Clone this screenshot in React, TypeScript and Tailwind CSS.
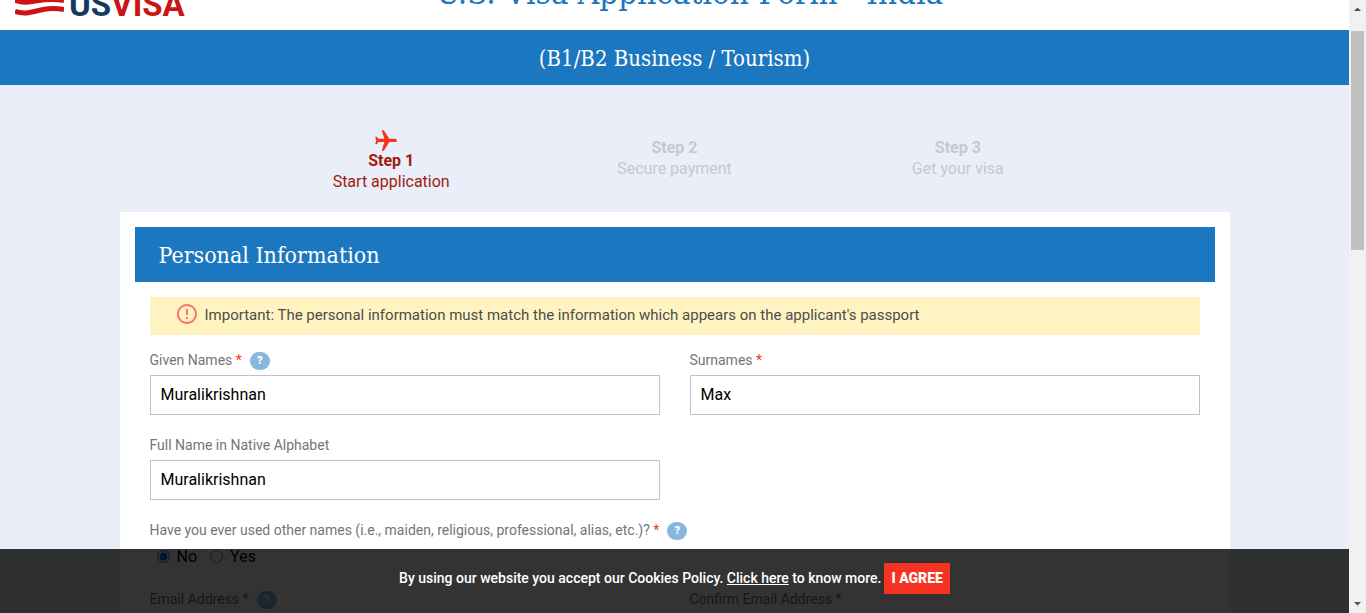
import type { ReactNode } from "react";
import { MdErrorOutline, MdFlight } from "react-icons/md";

const slab = "font-['DejaVu_Serif_Condensed','DejaVu_Serif',serif]";

function Help() {
  return (
    <button
      type="button"
      aria-label="Help"
      className="mt-[2px] ml-2 inline-flex h-[18px] w-5 items-center justify-center rounded-full bg-[#87b7de] text-[11px] font-black text-white"
    >
      ?
    </button>
  );
}

function LabelText({ children, required }: { children: ReactNode; required?: boolean }) {
  return (
    <>
      {children}
      {required && <span className="text-[#f5331f]"> *</span>}
    </>
  );
}

type FieldProps = { id: string; label: string; value?: string; required?: boolean; help?: boolean };

function Field({ id, label, value, required, help }: FieldProps) {
  return (
    <div>
      <div className="flex h-[30px] items-center text-sm text-[#757575]">
        <label htmlFor={id}>
          <LabelText required={required}>{label}</LabelText>
        </label>
        {help && <Help />}
      </div>
      <input
        id={id}
        type="text"
        defaultValue={value}
        className="block h-10 w-full border border-[#bfc3cf] bg-white px-[10px] pb-[2px] text-base text-black outline-none"
      />
    </div>
  );
}

function Step({ title, text, active }: { title: string; text: string; active?: boolean }) {
  return (
    <li
      className={
        active
          ? "flex flex-col items-center text-[#a01c0c]"
          : "flex flex-col items-center pt-2 text-[#c5c9d2]"
      }
    >
      {active && (
        <span className="flex h-[21px] items-end pr-[10px]">
          <MdFlight className="-mb-1 size-[26px] rotate-90 text-[#f5331f]" />
        </span>
      )}
      <span className="text-base/[21px] font-bold">{title}</span>
      <span className="text-base/[21px]">{text}</span>
    </li>
  );
}

function Logo() {
  return (
    <a href="#home" aria-label="US Visa" className="flex items-end">
      <svg width="49" height="34" viewBox="0 0 49 34" className="mr-[5px] mb-[6px]" fill="none">
        <path
          d="M0 29.500C17 35 25 23 49 27.500M0 18.500C17 24 25 14 49 18.500M0 8.500C17 14 25 3 49 7.500"
          stroke="#cc1417"
          strokeWidth="5"
        />
      </svg>
      <span className="text-[33px]/[34px] font-bold text-[#cc1417]">
        <span className="text-[#123b5d]">US</span>VISA
      </span>
    </a>
  );
}

export default function App() {
  return (
    <div className="relative flex h-screen overflow-hidden bg-[#eaeef8] font-[Roboto,sans-serif]">
      <main className="min-w-0 flex-1 overflow-hidden">
        <header className="grid grid-cols-[201px_1fr_186px] grid-rows-[30px] items-end overflow-hidden bg-white pl-[15px]">
          <div className="pb-2">
            <Logo />
          </div>
          <h1 className={`${slab} flex justify-center pb-[19px] text-[33px]/[36px] whitespace-nowrap text-[#1b77c0]`}>
            U.S. Visa Application Form - India
          </h1>
        </header>
        <h2 className={`${slab} bg-[#1b77c0] pt-[2px] text-center text-[22px]/[53px] text-white`}>
          (B1/B2 Business / Tourism)
        </h2>

        <ol className="mx-auto grid max-w-[850px] grid-cols-3 pt-11 pb-5">
          <Step title="Step 1" text="Start application" active />
          <Step title="Step 2" text="Secure payment" />
          <Step title="Step 3" text="Get your visa" />
        </ol>

        <form className="mx-auto max-w-[1110px] bg-white p-[15px]">
          <h3 className={`${slab} bg-[#1b77c0] px-6 pt-[2px] text-[23px]/[53px] text-white`}>
            Personal Information
          </h3>
          <div className="px-[15px]">
            <p className="mt-[15px] mb-[10px] flex h-[38px] items-center bg-[#fff4c1] px-[25px] pb-[2px] text-[15px] text-[#4c4c4c]">
              <MdErrorOutline className="mr-[6px] mb-[2px] size-6 text-[#fb7570]" />
              Important: The personal information must match the information which appears on the
              applicant's passport
            </p>
            <div className="grid grid-cols-2 gap-x-[30px] gap-y-[15px]">
              <Field id="given" label="Given Names" value="Muralikrishnan" required help />
              <Field id="surnames" label="Surnames" value="Max" required />
              <Field id="native" label="Full Name in Native Alphabet" value="Muralikrishnan" />
            </div>
            <fieldset className="mt-[15px] mb-4">
              <legend className="flex h-[30px] items-center text-sm text-[#757575]">
                <span>
                  <LabelText required>
                    Have you ever used other names (i.e., maiden, religious, professional, alias, etc.)?
                  </LabelText>
                </span>
                <Help />
              </legend>
              <div className="flex h-[23px] items-center gap-[13px] pl-[7px] text-base text-black">
                <label className="flex items-center gap-[7px]">
                  <input type="radio" name="other" defaultChecked className="size-[13px]" />
                  No
                </label>
                <label className="flex items-center gap-[7px]">
                  <input type="radio" name="other" className="size-[13px]" />
                  Yes
                </label>
              </div>
            </fieldset>
            <div className="grid grid-cols-2 gap-x-[30px]">
              <Field id="email" label="Email Address" required help />
              <Field id="confirm" label="Confirm Email Address" required />
            </div>
          </div>
        </form>
      </main>

      <div className="flex w-[17px] shrink-0 flex-col items-center bg-[#f1f1f1]" aria-hidden="true">
        <svg width="17" height="17" viewBox="0 0 17 17" fill="#505050">
          <path d="M5 11h7L8.500 7.500z" />
        </svg>
        <div className="mt-[14px] h-[219px] w-[13px] bg-[#c1c1c1]" />
        <svg className="mt-auto" width="17" height="17" viewBox="0 0 17 17" fill="#505050">
          <path d="M5 6h7L8.500 9.500z" />
        </svg>
      </div>

      <div className="absolute right-[17px] bottom-0 left-0 flex h-16 items-center justify-center bg-black/80 pb-[6px] text-sm font-medium text-white">
        <p>
          By using our website you accept our Cookies Policy.{" "}
          <a href="#cookies" className="underline">
            Click here
          </a>{" "}
          to know more.
        </p>
        <button type="button" className="ml-[3px] h-[31px] bg-[#f63323] px-[7px] text-sm font-black">
          I AGREE
        </button>
      </div>
    </div>
  );
}
